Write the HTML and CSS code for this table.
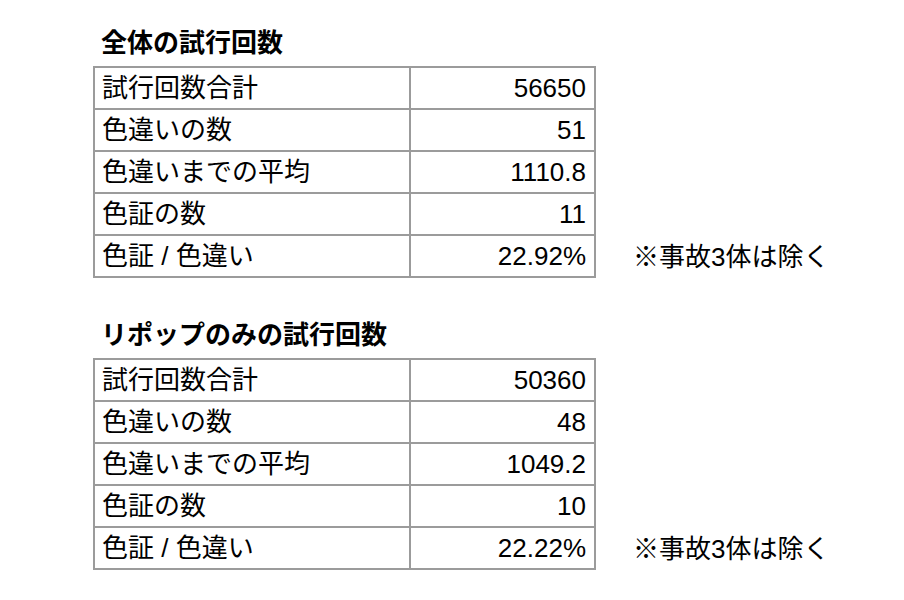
FILE: index.html
```html
<!DOCTYPE html>
<html lang="ja">
<head>
<meta charset="utf-8">
<link rel="stylesheet" href="styles.css">
</head>
<body>
<div class="page">
  <section class="block">
    <h2 class="title">全体の試行回数</h2>
    <div class="row">
      <table class="stats">
        <tr><td class="label">試行回数合計</td><td class="value">56650</td></tr>
        <tr><td class="label">色違いの数</td><td class="value">51</td></tr>
        <tr><td class="label">色違いまでの平均</td><td class="value">1110.8</td></tr>
        <tr><td class="label">色証の数</td><td class="value">11</td></tr>
        <tr><td class="label">色証 / 色違い</td><td class="value">22.92%</td></tr>
      </table>
      <div class="note">※事故3体は除く</div>
    </div>
  </section>
  <section class="block second">
    <h2 class="title">リポップのみの試行回数</h2>
    <div class="row">
      <table class="stats">
        <tr><td class="label">試行回数合計</td><td class="value">50360</td></tr>
        <tr><td class="label">色違いの数</td><td class="value">48</td></tr>
        <tr><td class="label">色違いまでの平均</td><td class="value">1049.2</td></tr>
        <tr><td class="label">色証の数</td><td class="value">10</td></tr>
        <tr><td class="label">色証 / 色違い</td><td class="value">22.22%</td></tr>
      </table>
      <div class="note">※事故3体は除く</div>
    </div>
  </section>
</div>
</body>
</html>
```
FILE: styles.css
```css
html, body {
  margin: 0;
  padding: 0;
  background: #ffffff;
}
body {
  font-family: "Liberation Sans", "Noto Sans CJK JP", sans-serif;
  color: #000000;
  font-size: 26px;
}
.page {
  padding: 26px 0 0 93px;
}
.block.second {
  margin-top: 40px;
}
.title {
  margin: 0 0 6px 8px;
  font-size: 26px;
  font-weight: bold;
  line-height: 34px;
}
.row {
  display: flex;
  align-items: flex-end;
}
.stats {
  border-collapse: collapse;
  border: 2px solid #9b9b9b;
}
.stats td {
  border: 2px solid #9b9b9b;
  height: 40px;
  padding: 0 8px 0 7px;
  line-height: 40px;
  box-sizing: border-box;
}
.label {
  width: 316px;
  text-align: left;
}
.value {
  width: 185px;
  text-align: right;
}
.note {
  margin-left: 37px;
  height: 42px;
  line-height: 42px;
}
```
